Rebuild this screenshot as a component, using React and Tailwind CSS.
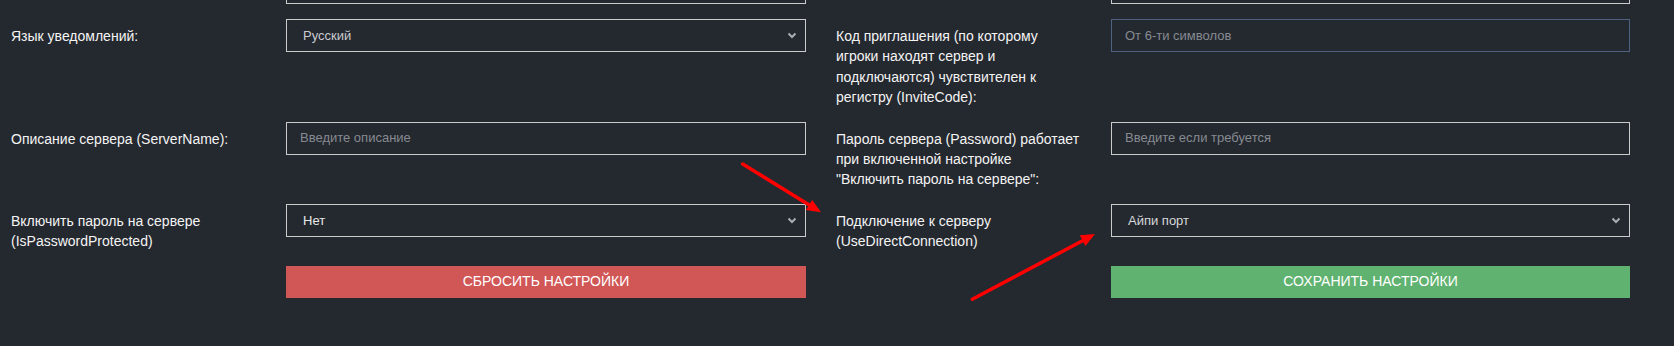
import React from "react";

const Chevron = () => (
  <svg width="10" height="7" viewBox="0 0 10 7" className="shrink-0">
    <polyline points="1.5,1.5 5,5 8.5,1.5" fill="none" stroke="#a9acb0" strokeWidth="2" />
  </svg>
);

const Label = ({ children }) => (
  <div className="pt-[7px] pr-[31px] text-[14px] leading-[20.25px] text-[#f4f4f4]">{children}</div>
);

const Select = ({ value, color = "text-[#c9ccd0]" }) => (
  <div className="h-[33px] border border-[#cbcbcb] flex items-center justify-between pl-[16px] pr-[8px]">
    <span className={`text-[13px] ${color}`}>{value}</span>
    <Chevron />
  </div>
);

const Input = ({ placeholder, focus }) => (
  <div
    className={`h-[33px] border flex items-center pl-[13px] ${
      focus ? "border-[#4d6180]" : "border-[#cbcbcb]"
    }`}
  >
    <span className="text-[13px] text-[#878b91]">{placeholder}</span>
  </div>
);

export default function App() {
  return (
    <div
      className="relative w-full min-h-[346px] bg-[#24282f] overflow-hidden"
      style={{ fontFamily: '"Liberation Sans", Arial, sans-serif' }}
    >
      <div className="pl-[11px] grid grid-cols-[275px_520px_305px_519px] gap-x-0 gap-y-[14.5px] [&>*:nth-child(4n+3)]:pl-[30px]">
        {/* partial row above */}
        <div className="h-[4.5px]" />
        <div className="h-[4px] border-x border-b border-[#cbcbcb]" />
        <div className="h-[4.5px]" />
        <div className="h-[4px] border-x border-b border-[#cbcbcb]" />

        {/* row 1 */}
        <Label>Язык уведомлений:</Label>
        <Select value="Русский" />
        <Label>
          Код приглашения (по которому игроки находят сервер и подключаются) чувствителен к регистру
          (InviteCode):
        </Label>
        <Input placeholder="От 6-ти символов" focus />

        {/* row 2 */}
        <Label>Описание сервера (ServerName):</Label>
        <Input placeholder="Введите описание" />
        <Label>
          Пароль сервера (Password) работает при включенной настройке "Включить пароль на сервере":
        </Label>
        <Input placeholder="Введите если требуется" />

        {/* row 3 */}
        <Label>Включить пароль на сервере (IsPasswordProtected)</Label>
        <Select value="Нет" color="text-[#e8e8e8]" />
        <Label>Подключение к серверу (UseDirectConnection)</Label>
        <Select value="Айпи порт" color="text-[#d6d8da]" />

        {/* buttons */}
        <div />
        <button className="h-[32px] bg-[#d15656] text-white text-[14px] uppercase">
          Сбросить настройки
        </button>
        <div />
        <button className="h-[32px] bg-[#5fb26f] text-white text-[14px] uppercase">
          Сохранить настройки
        </button>
      </div>

      <svg
        className="absolute left-0 top-0 pointer-events-none"
        width="1674"
        height="346"
        viewBox="0 0 1674 346"
      >
        <line x1="742.7" y1="164" x2="810" y2="205.5" stroke="#ff0000" strokeWidth="3.5" strokeLinecap="round" />
        <polygon points="821,212.3 805.9,210.1 812.2,199.9" fill="#ff0000" />
        <line x1="972.3" y1="299.3" x2="1083.5" y2="240.2" stroke="#ff0000" strokeWidth="3.5" strokeLinecap="round" />
        <polygon points="1095,234 1085.4,245.9 1079.8,235.3" fill="#ff0000" />
      </svg>
    </div>
  );
}
